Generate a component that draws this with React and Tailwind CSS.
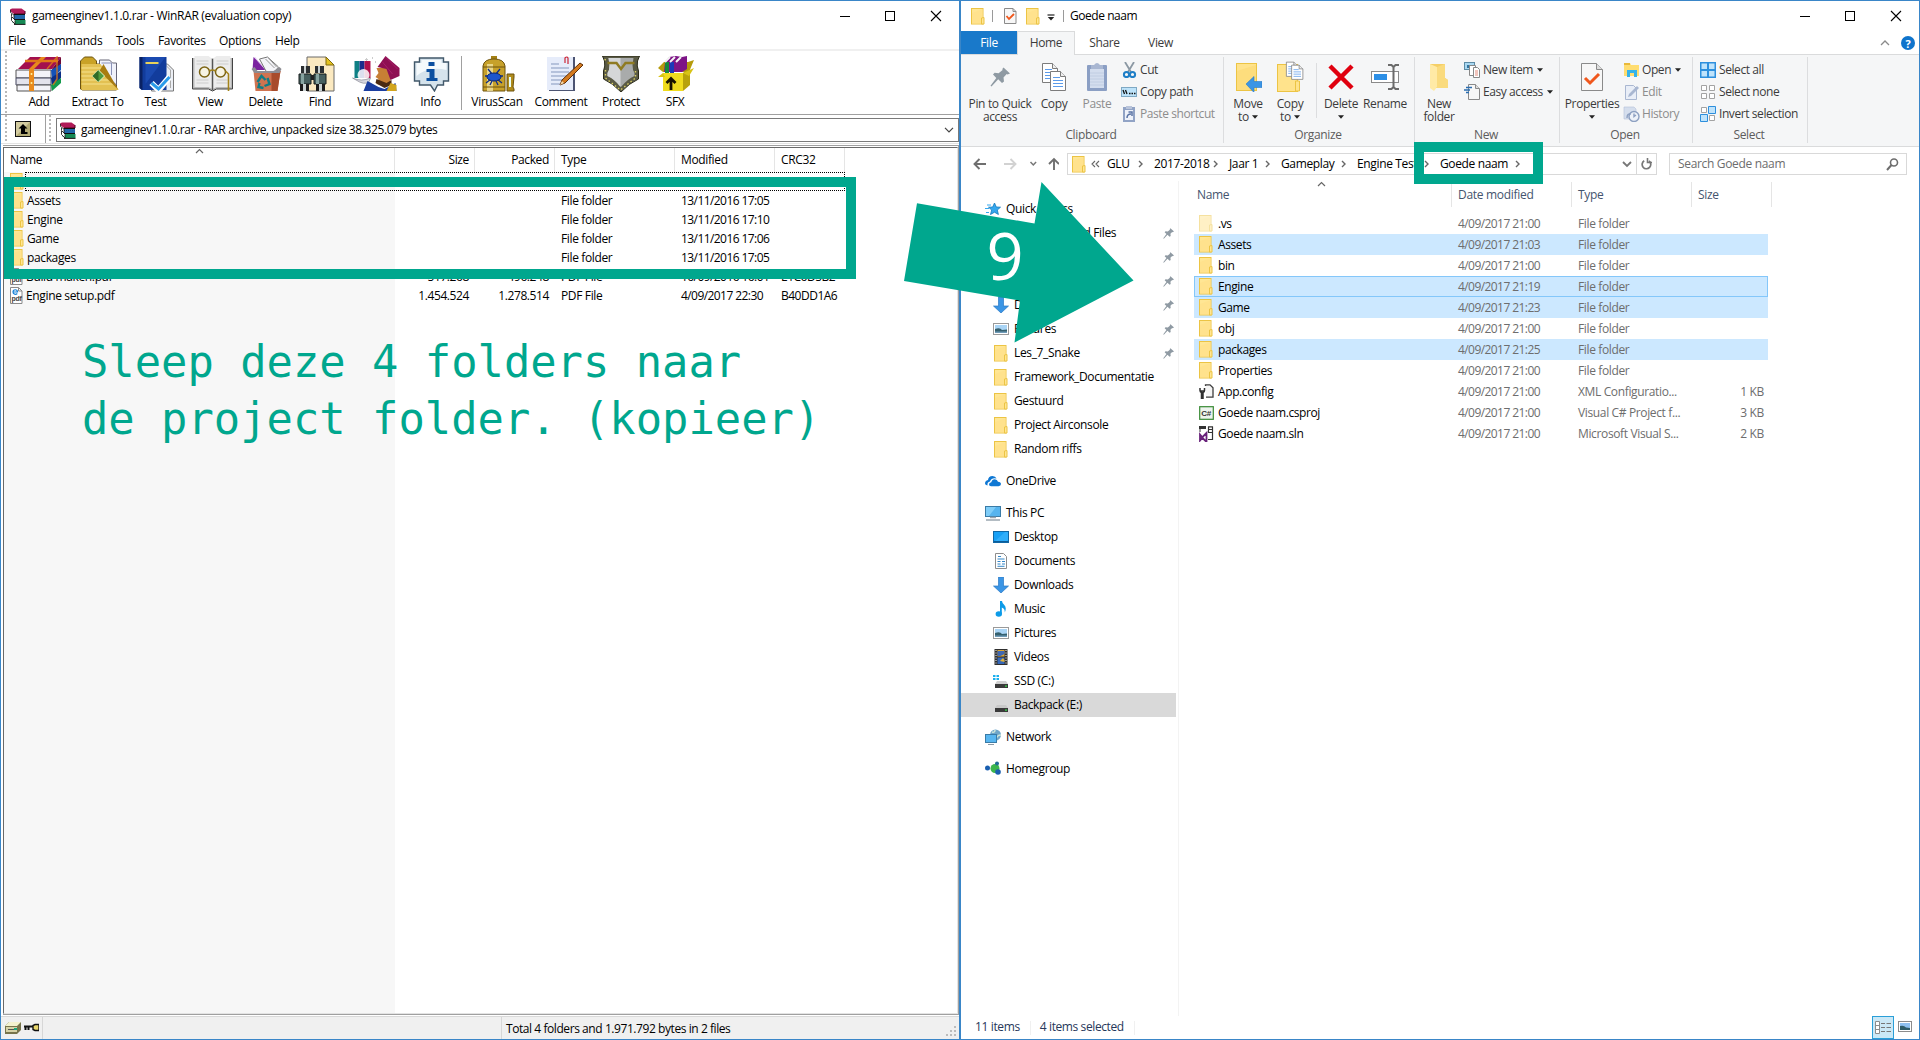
import React from "react";

/* ---------- shared drawings ---------- */

function Folder({ faded }) {
  return (
    <svg width="14" height="17" viewBox="0 0 14 17" className={faded ? "shrink-0 opacity-50" : "shrink-0"}>
      <rect x="0.5" y="0.5" width="11.5" height="15.5" fill="#ffe694" stroke="#ecc444" />
      <path d="M1 16V5L12 1v15z" fill="#ffe089" opacity=".6" />
      <path d="M10.500 16V10l2.500-.5v6.500z" fill="#ffe694" stroke="#ecc444" />
    </svg>
  );
}

function RarIcon() {
  return (
    <svg width="17" height="17" viewBox="0 0 17 17" className="shrink-0">
      <path d="M1 1.500L3 .5h9.500L16 3v3H5L1 3z" fill="#b01a58" />
      <path d="M5 6h11V3" fill="none" stroke="#4d0524" />
      <path d="M4 7h12v4H5L3 9z" fill="#2166a8" />
      <path d="M5 12h11.500v4H6l-3-2z" fill="#178a55" />
      <path d="M1.500 2v2.500L5 7v4l-2.500-2.500V6M2.500 9v3.500L6 16v-3.500" fill="#fff" stroke="#222" strokeWidth=".9" />
      <path d="M5 6.500h11M5 11.500h11M5 16.400h11.500" stroke="#111" />
    </svg>
  );
}

function PdfIcon() {
  return (
    <svg width="13" height="17" viewBox="0 0 13 17" className="shrink-0">
      <path d="M.5.500h8l3.500 3.500v12.500H.5z" fill="#fff" stroke="#8a8a8a" />
      <path d="M8.500.500V4H12" fill="none" stroke="#8a8a8a" />
      <path d="M3 5h4.500C7.500 2 3 2 3 5c0 2.500 3 2.800 4.300 1.500" fill="none" stroke="#1883d7" strokeWidth="1.200" />
      <text x="1.500" y="14" fontSize="7" fontWeight="bold" letterSpacing="-.3" fontFamily="Liberation Sans, sans-serif" fill="#444">pdf</text>
    </svg>
  );
}

function Pin({ size = 11 }) {
  return (
    <svg width={size} height={size} viewBox="0 0 20 20" className="shrink-0">
      <path d="M13.500 0.500l6.500 6-2.500 1-.8-.4-3.200 3.400.5 4-2 1.500-3.800-3.700L1.500 19.500l-1-.7L6.300 11 3 7.600l1.600-1.900 4 .5L12.600 3l-.3-1z" fill="#8f9aa3" />
    </svg>
  );
}

function Caret() {
  return (
    <svg width="6" height="4" viewBox="0 0 6 4" className="inline-block shrink-0">
      <path d="M0 .3h6L3 3.700z" fill="#222" />
    </svg>
  );
}

function SortUp() {
  return (
    <svg width="9" height="6" viewBox="0 0 9 6">
      <path d="M1 5l3.500-3.500L8 5" fill="none" stroke="#666" strokeWidth="1.200" />
    </svg>
  );
}

function WindowButtons() {
  return (
    <svg width="102" height="12" viewBox="0 0 102 12" className="shrink-0" shapeRendering="crispEdges">
      <path d="M0 6.500h10" stroke="#000" />
      <rect x="45.500" y="1.500" width="9" height="9" fill="none" stroke="#000" />
      <path d="M91 1l10 10M101 1L91 11" stroke="#000" shapeRendering="auto" strokeWidth="1.100" />
    </svg>
  );
}

/* ---------- archive window toolbar ---------- */

const toolIcons = {
  Add: (
    <g transform="translate(2)">
      <path d="M2 13L14 1h31L36 13z" fill="#a3104e" />
      <path d="M36 13L45 1v7l-8 10z" fill="#6e0a36" />
      <path d="M0 14h35v8H0z" fill="#f3f3f8" stroke="#555" />
      <path d="M35 14l10-6v6l-9 9z" fill="#1452b8" />
      <path d="M0 22h35v7H0z" fill="#e3e3ec" stroke="#44475e" />
      <path d="M35 22l10-7v7l-9 8z" fill="#0b2e86" />
      <path d="M1 29h34v6H1z" fill="#f3f3f8" stroke="#555" />
      <path d="M35 29l10-7v5l-9 8z" fill="#139a4c" />
      <path d="M13 13h5v22h-5zM13 13L25 1h5L18 13z" fill="#e98a1c" />
      <path d="M9 5h33" fill="none" stroke="#e07a18" strokeWidth="2.500" />
      <path d="M31 13L41 1v22l-4 6" fill="none" stroke="#e07a18" strokeWidth="1.500" opacity=".8" />
      <circle cx="15.500" cy="18" r="1" fill="#fff3a0" /><circle cx="15.500" cy="27" r="1" fill="#fff3a0" />
    </g>
  ),
  "Extract To": (
    <g transform="translate(6.500)">
      <path d="M1 33V5l4-4h8l4 4v3h20v26H3z" fill="#c9a227" stroke="#6d5410" />
      <path d="M20 4h10l3 3h4v22L20 14z" fill="#f0f2fa" stroke="#667" />
      <path d="M22 7h10v12" fill="none" stroke="#8b93b8" />
      <path d="M2 8h19l18 26H2z" fill="#e3c153" />
      <path d="M2 12h20M2 16h21M2 20h24M2 24h28M2 28h32" stroke="#f6e28e" />
      <path d="M24 8l15 26L20 15z" fill="#a87c10" />
      <path d="M19 14l6 6-6 6-6-6z" fill="#4f9a3d" stroke="#ddf5c8" />
      <path d="M19 14v12l-6-6z" fill="#2f6b27" />
    </g>
  ),
  Test: (
    <g transform="translate(8.500)">
      <path d="M22 8h6l6 6v21H12V8z" fill="#eceff5" stroke="#777" />
      <path d="M24 7l7 7v18" fill="none" stroke="#aaa" />
      <path d="M0 1h27v33H2L0 32z" fill="#123c9c" />
      <path d="M0 1h3v33L0 32z" fill="#0a2263" />
      <path d="M6 1h20L6 28z" fill="#2457c4" opacity=".5" />
      <path d="M6 7h13" stroke="#e8d25a" strokeWidth="2" />
      <path d="M12 27l7 7L30 21" fill="none" stroke="#fff" strokeWidth="6" />
      <path d="M12 27l7 6L30 21" fill="none" stroke="#2a9bea" strokeWidth="3" />
    </g>
  ),
  View: (
    <g transform="translate(5.500)">
      <path d="M1 2v31h16l4 2 4-2h16V2" fill="#b9b9b9" stroke="#444" />
      <path d="M3 0h14l4 3v30l-4-2H3zM39 0H25l-4 3v30l4-2h14z" fill="#ececec" />
      <path d="M21 3v31" stroke="#555" strokeWidth="1.500" />
      <path d="M5 5h12M5 8h12M5 24h12M5 27h12M25 5h12M25 8h12M25 24h11M25 27h11" stroke="#ccc" />
      <circle cx="13" cy="16" r="5" fill="#f7f4e4" stroke="#7b6312" strokeWidth="1.500" />
      <circle cx="29" cy="16" r="5" fill="#f7f4e4" stroke="#7b6312" strokeWidth="1.500" />
      <path d="M18 15q3-2 6 0M34 15l3 3v17" fill="none" stroke="#a3831a" strokeWidth="1.600" />
    </g>
  ),
  Delete: (
    <g transform="translate(10.500)">
      <path d="M2 1L15 14H1z" fill="#7b23a0" /><path d="M3 1l12 14" stroke="#d9b8ea" />
      <path d="M8 3l8-2 11 10-4 5h-8z" fill="#f4f4f8" stroke="#777" />
      <path d="M14 3l9 9M17 2l8 9" stroke="#999" />
      <path d="M2 15h27l-3 20H4z" fill="#cf7350" />
      <path d="M20 15h9l-3 20h-6z" fill="#a84c2c" />
      <path d="M0 13l3-2 3 4h16l6-4 2 2-2 4H3z" fill="#8d8d93" />
      <path d="M6 26l4-6 4 4M16 22l2 6-5 2M12 32l-5-1 1-4" fill="none" stroke="#0f7d86" strokeWidth="2.400" />
    </g>
  ),
  Find: (
    <g transform="translate(3)">
      <path d="M9 1h19l8 8v26H9z" fill="#fbe9c0" stroke="#6b6b6b" />
      <path d="M28 1v8h8z" fill="#e4c21d" stroke="#806a10" />
      <path d="M3 10h9v7H3zM17 10h9v7h-9z" fill="#2b2f31" />
      <path d="M1 18h12v10H1zM16 18h12v10H16z" fill="#47605f" stroke="#161c1c" />
      <path d="M3 18h3v10H3zM18 18h3v10h-3z" fill="#86a3a0" />
      <path d="M2 28h9v7H2zM18 28h9v7h-9z" fill="#1b1b1b" />
      <path d="M5 28h3v7H5zM21 28h3v7h-3zM6 10h2v7H6zM20 10h2v7h-2z" fill="#c9d1d1" />
      <path d="M13 19h3v5h-3z" fill="#222" />
    </g>
  ),
  Wizard: (
    <g transform="translate(1.500)">
      <path d="M2 5h5v17H2z" fill="#0f7f84" /><path d="M7 5h5v17H7z" fill="#1b2d8c" /><path d="M12 5h6v17h-6z" fill="#b0104d" />
      <circle cx="11" cy="19" r="6" fill="#fff" opacity=".85" />
      <path d="M0 22q9 4 18 0l-2 5q-6 1-9-1z" fill="#d7d7de" stroke="#667" strokeWidth=".5" />
      <path d="M24 12h14v14l-6 4-8-2 2-5-3-2 3-4z" fill="#c77f35" />
      <path d="M25 11L33 0l14 12v8l-9 4-4-11z" fill="#8e0f52" />
      <path d="M33 1l12 12M30 6l10 12" stroke="#a52068" />
      <path d="M24 23l10 4 5-3v5l-7 3-9-5z" fill="#4a2a12" />
      <path d="M11 35l4-10 11 6 6 2 11-6 1 8z" fill="#1b3ea0" />
      <path d="M34 35l4-8 6 2v6z" fill="#d2a51d" />
      <path d="M14 2v3M20 1v2M23 5v2M12.500 3.500h3" stroke="#ccc" />
    </g>
  ),
  Info: (
    <g transform="translate(8.500)">
      <path d="M5 2h24v4h5v19h-5v4h-6l-3 6-4-6H5v-4H0V6h5z" fill="#d5e3ec" stroke="#41586a" strokeWidth="1.400" />
      <path d="M7 4h20v3h5v7Q14 10 2 20V7h5z" fill="#f5fafc" />
      <path d="M14 6h6v4h-6zM12 13h8v9h3v3H12v-3h3v-6h-3z" fill="#0b4fa0" />
    </g>
  ),
  VirusScan: (
    <g transform="translate(11)">
      <path d="M8 0h6v3H8z" fill="#a38015" />
      <path d="M0 10Q1 3 11 3t11 7v25H0z" fill="#c7a12b" stroke="#6c520c" />
      <path d="M4 8h6v27H4z" fill="#f2e3a0" opacity=".8" />
      <path d="M0 11h22M0 31h22" stroke="#6c520c" />
      <path d="M5 13l4 5M17 13l-4 5M2 20h5M20 20h-5M3 27l5-4M19 27l-5-4M7 29l2-4M15 29l-2-4" stroke="#0c2c88" strokeWidth="1.300" />
      <ellipse cx="11" cy="21" rx="7" ry="4" fill="#1c55cc" stroke="#0a2572" />
      <path d="M24 18h7v3l-1 10 1 2v2h-7z" fill="#b08c1c" stroke="#6c520c" /><path d="M27 21v10" stroke="#e8fff8" strokeWidth="2" />
    </g>
  ),
  Comment: (
    <g transform="translate(11)">
      <path d="M2 1h26v34H2z" fill="#4c5472" />
      <path d="M0 1h26v33H0z" fill="#e6ecfa" />
      <path d="M4 8h8M4 12h18M4 16h18M4 20h18M4 24h15M4 28h9" stroke="#8497bd" />
      <path d="M18 7V2q2-2 3 0v6" fill="none" stroke="#cc2536" strokeWidth="1.200" />
      <path d="M33 7l3 2-18 18-5 2 2-5z" fill="#d47a1e" stroke="#5e2f08" />
      <path d="M13 29l2-4 2 2z" fill="#f7dcae" />
    </g>
  ),
  Protect: (
    <g transform="translate(6.500)">
      <path d="M0 0h37l-2 5q-1 5 1 10v8q-9 4-17.500 13Q10 27 1 23v-8q2-5 1-10z" fill="#5a5a45" stroke="#2a2a18" />
      <path d="M6 2h25l-1 7q0 5 2 8v3q-7 3-13.500 11Q12 23 5 20v-3q2-3 2-8z" fill="#a9abab" />
      <path d="M6 2h12v29Q12 23 5 20v-3q2-3 2-8z" fill="#d5d7d8" />
      <path d="M5 7h9l4.500 6L23 7h9" fill="none" stroke="#8f7b22" strokeWidth="2.500" />
      <path d="M3 3l-1 2M3 14v8l15 12 15-12v-8" fill="none" stroke="#d9cf62" strokeDasharray="1.500 2.500" strokeWidth="1.400" />
    </g>
  ),
  SFX: (
    <g transform="translate(8)">
      <path d="M0 12l6-6h24l6-2-5 12H5z" fill="#b59b0c" />
      <path d="M7 6l4-5 7-1 6 1 5-1v13l-5 3H6z" fill="#7d1486" />
      <path d="M7 6h4v11H7z" fill="#15873d" /><path d="M12 6h4v11h-4z" fill="#1b39b8" />
      <path d="M7 6l5-5M12 6l5-5M18 6l5-5" stroke="#f4f4f4" strokeWidth="2" />
      <path d="M5 17h20v18H5z" fill="#f0dc1d" />
      <path d="M25 17l7-5v17l-7 6z" fill="#b8a20c" />
      <path d="M5 17l-5 4h7M25 17l11-5-5 8" fill="#d8c315" />
      <path d="M13 34V23M8.500 27l4.500-4.500 4.500 4.500" fill="none" stroke="#1a1400" strokeWidth="2.800" />
    </g>
  ),
};

function Tool({ name, w }) {
  return (
    <div className={`flex flex-col items-center ${w}`}>
      <svg width="50" height="36" viewBox="0 0 50 36">{toolIcons[name]}</svg>
      <span className="mt-[2px] leading-[16px]">{name}</span>
    </div>
  );
}

function Grip({ h }) {
  return (
    <div className={`w-[2px] shrink-0 ${h} bg-[repeating-linear-gradient(to_bottom,#b8b8b8_0,#b8b8b8_2px,#fff_2px,#fff_4px)]`} />
  );
}

/* ---------- archive window ---------- */

const archiveGrid = "grid w-[841px] grid-cols-[391px_80px_80px_120px_100px_70px]";

function ArchiveRow({ icon, name, size, packed, type, date, crc }) {
  return (
    <div className={`${archiveGrid} h-[19px] items-center`}>
      <div className="flex items-center gap-[3px] pl-[6px]">{icon}<span>{name}</span></div>
      <div className="pr-[6px] text-right tracking-[-0.4px]">{size}</div>
      <div className="pr-[6px] text-right tracking-[-0.4px]">{packed}</div>
      <div className="pl-[6px]">{type}</div>
      <div className="pl-[6px] tracking-[-0.57px]">{date}</div>
      <div className="pl-[6px] tracking-[-0.5px]">{crc}</div>
    </div>
  );
}

function ArchiveWindow() {
  return (
    <section className="flex h-[1040px] w-[960px] flex-col border border-[#3a86c8] bg-white">
      <header className="flex h-[30px] shrink-0 items-center pr-[17px] pl-[8px]">
        <RarIcon />
        <span className="ml-[6px] flex-1 tracking-[-0.3px]">gameenginev1.1.0.rar - WinRAR (evaluation copy)</span>
        <WindowButtons />
      </header>
      <nav className="flex h-[20px] shrink-0 items-center border-b-2 border-[#f0f0f0] pt-[2px] pl-[7px]">
        <span className="w-[32px]">File</span>
        <span className="w-[76px] tracking-[-0.2px]">Commands</span>
        <span className="w-[42px]">Tools</span>
        <span className="w-[61px]">Favorites</span>
        <span className="w-[56px]">Options</span>
        <span>Help</span>
      </nav>
      <div className="flex h-[64px] shrink-0 border-b border-[#a0a0a0] pl-[4px]">
        <Grip h="h-[62px]" />
        <div className="flex pt-[5px] pl-[3px]">
          <Tool name="Add" w="w-[58px]" />
          <Tool name="Extract To" w="w-[59px]" />
          <Tool name="Test" w="w-[57px]" />
          <Tool name="View" w="w-[53px]" />
          <Tool name="Delete" w="w-[57px]" />
          <Tool name="Find" w="w-[52px]" />
          <Tool name="Wizard" w="w-[59px]" />
          <Tool name="Info" w="w-[51px]" />
          <div className="mr-[6px] ml-[5px] h-[54px] w-px bg-[#a0a0a0]" />
          <Tool name="VirusScan" w="w-[58px]" />
          <Tool name="Comment" w="w-[70px]" />
          <Tool name="Protect" w="w-[50px]" />
          <Tool name="SFX" w="w-[58px]" />
        </div>
      </div>
      <div className="flex h-[29px] shrink-0 items-center border-b border-[#e3e3e3] pl-[4px]">
        <Grip h="h-[28px]" />
        <svg width="16" height="16" viewBox="0 0 16 16" className="ml-[8px]">
          <rect x=".5" y=".5" width="15" height="15" fill="#b3ab75" stroke="#111" />
          <path d="M1 1h14L1 15z" fill="#e8e3bd" opacity=".6" />
          <path d="M8 3l4.500 4.500H10V11h2.500v2H6V7.500H3.500z" fill="#000" />
        </svg>
        <div className="ml-[14px] h-[28px] w-px bg-[#a0a0a0]" />
        <div className="ml-[3px]"><Grip h="h-[28px]" /></div>
        <div className="mt-[2px] ml-[5px] flex h-[24px] flex-1 items-center border border-[#7a7a7a] pr-[4px] pl-[2px]">
          <RarIcon />
          <span className="ml-[5px] flex-1">gameenginev1.1.0.rar - RAR archive, unpacked size 38.325.079 bytes</span>
          <svg width="10" height="6" viewBox="0 0 10 6"><path d="M1 .8l4 4 4-4" fill="none" stroke="#444" strokeWidth="1.200" /></svg>
        </div>
      </div>
      <div className="mt-px ml-[2px] flex min-h-0 flex-1 flex-col border-t border-r border-b border-[#a0a0a0] pt-px">
        <div className="flex min-h-0 flex-1 flex-col border border-t-[#696969] border-r-[#e3e3e3] border-b-[#e3e3e3] border-l-[#696969]">
          <div className={`${archiveGrid} relative h-[24px] shrink-0 items-center [&>div]:flex [&>div]:h-full [&>div]:items-center [&>div]:border-r [&>div]:border-[#e5e5e5]`}>
            <div className="pl-[6px]">Name</div>
            <div className="justify-end pr-[5px]">Size</div>
            <div className="justify-end pr-[5px]">Packed</div>
            <div className="pl-[6px]">Type</div>
            <div className="pl-[6px]">Modified</div>
            <div className="pl-[6px]">CRC32</div>
            <span className="absolute top-0 left-[191px] leading-none"><SortUp /></span>
          </div>
          <div className="flex-1 bg-[linear-gradient(to_right,#f7f7f7_391px,#fff_391px)]">
            <div className="flex h-[19px] w-[841px] items-center gap-[1px] pl-[6px]">
              <Folder />
              <div className="h-[19px] flex-1 border border-dotted border-black" />
            </div>
            <ArchiveRow icon={<Folder />} name="Assets" type="File folder" date="13/11/2016 17:05" />
            <ArchiveRow icon={<Folder />} name="Engine" type="File folder" date="13/11/2016 17:10" />
            <ArchiveRow icon={<Folder />} name="Game" type="File folder" date="13/11/2016 17:06" />
            <ArchiveRow icon={<Folder />} name="packages" type="File folder" date="13/11/2016 17:05" />
            <ArchiveRow icon={<PdfIcon />} name="Build maken.pdf" size="517.268" packed="496.248" type="PDF File" date="16/09/2016 16:01" crc="E1C6D5B2" />
            <ArchiveRow icon={<PdfIcon />} name="Engine setup.pdf" size="1.454.524" packed="1.278.514" type="PDF File" date="4/09/2017 22:30" crc="B40DD1A6" />
          </div>
        </div>
      </div>
      <footer className="mt-px flex h-[23px] shrink-0 items-center border-t border-[#d9d9d9] bg-[#f0f0f0] pl-[4px]">
        <svg width="34" height="14" viewBox="0 0 34 14">
          <path d="M0 5l4-4h12v8l-4 4H0z" fill="#77744c" />
          <path d="M0 5l4-4h12l-4 4z" fill="#f4f1cf" /><path d="M1 6h11v5H1z" fill="#d6d2a6" />
          <path d="M3 8.500h7" stroke="#555" /><rect x="9" y="7" width="3" height="2" fill="#19a67a" />
          <path d="M19 5.500h10M20.500 5v4M23.500 5v4" stroke="#111" strokeWidth="2" />
          <path d="M34 3.500h-4l-2 1v4l2 1h4z" fill="#e8d66a" stroke="#111" strokeWidth="1.400" />
        </svg>
        <div className="ml-[3px] h-full w-px bg-[#d7d7d7]" />
        <div className="ml-[458px] h-full w-px bg-[#d7d7d7]" />
        <span className="ml-[4px] flex-1 pt-[1px] tracking-[-0.43px]">Total 4 folders and 1.971.792 bytes in 2 files</span>
        <svg width="12" height="12" viewBox="0 0 12 12" className="mt-[7px] mr-px" fill="#bcbcbc">
          <path d="M8 0h2v2H8zM8 4h2v2H8zM8 8h2v2H8zM4 4h2v2H4zM4 8h2v2H4zM0 8h2v2H0z" />
        </svg>
      </footer>
    </section>
  );
}

/* ---------- explorer ribbon ---------- */

function BigButton({ w, icon, lines, caret, muted }) {
  return (
    <div className={`flex flex-col items-center ${w} ${muted ? "text-[#8d8d8d]" : ""}`}>
      <div className="flex h-[32px] items-center justify-center">{icon}</div>
      <div className="mt-[4px] flex flex-col items-center leading-[13px] whitespace-nowrap">
        {lines.map((line, i) => (
          <span key={line} className="flex items-center gap-[3px]">
            {line}
            {caret === "inline" && i === lines.length - 1 && <Caret />}
          </span>
        ))}
        {caret === "below" && <span className="flex h-[13px] items-center"><Caret /></span>}
      </div>
    </div>
  );
}

function SmallButton({ icon, label, caret, muted }) {
  return (
    <div className={`flex h-[22px] items-center gap-[2px] whitespace-nowrap ${muted ? "text-[#8d8d8d]" : ""}`}>
      <svg width="17" height="16" viewBox="0 0 17 16">{icon}</svg>
      <span className="tracking-[-0.42px]">{label}</span>
      {caret && <span className="ml-[2px] flex items-center"><Caret /></span>}
    </div>
  );
}

function Group({ w, label, pad, children }) {
  return (
    <div className={`mt-[2px] flex h-[86px] flex-col border-r border-[#dcdddf] ${w}`}>
      <div className={`flex h-[73px] ${pad}`}>{children}</div>
      <div className="pr-[2px] text-center leading-[16px] text-[#5c5c5c]">{label}</div>
    </div>
  );
}

const Page = ({ x, y, s = "#7c7c7c" }) => (
  <g transform={`translate(${x} ${y})`}>
    <path d="M.5.500h10l5 5v14H.5z" fill="#fff" stroke={s} />
    <path d="M10.500.500v5h5" fill="#eee" stroke={s} />
    <path d="M3 6.500h7M3 9.500h10M3 12.500h10M3 15.500h10" stroke="#5b9bea" />
  </g>
);

const bigIcons = {
  pin: <Pin size={20} />,
  copy: <svg width="26" height="30" viewBox="0 0 26 30"><Page x={1} y={1} /><Page x={9} y={9} /></svg>,
  paste: (
    <svg width="22" height="30" viewBox="0 0 22 30">
      <rect x="1" y="3" width="20" height="26" rx="1" fill="#8b9fc4" /><rect x="4" y="7" width="14" height="19" fill="#d3ddee" />
      <path d="M5 3h3q3-4 6 0h3v4H5z" fill="#a9b7d2" /><path d="M4 11h14M4 14h14M4 17h14M4 20h14M4 23h14" stroke="#c0cde2" />
    </svg>
  ),
  move: (
    <svg width="28" height="30" viewBox="0 0 28 30">
      <rect x="2.500" y="1.500" width="20" height="27" fill="#ffe38c" stroke="#ecc444" /><path d="M3 28V9L22 3v25z" fill="#fbd873" opacity=".6" />
      <path d="M12 22l8-7.500v5h8v6h-8v5z" fill="#3b95e5" stroke="#2a79c4" strokeWidth=".6" />
    </svg>
  ),
  copyTo: (
    <svg width="28" height="32" viewBox="0 0 28 32">
      <rect x="1.500" y="3.500" width="20" height="27" fill="#ffe38c" stroke="#ecc444" /><path d="M19.500 30V20h4v10z" fill="#ffe38c" stroke="#ecc444" />
      <g transform="translate(10 0) scale(.75)"><Page x={0} y={1} /><Page x={7} y={5} /></g>
    </svg>
  ),
  del: (
    <svg width="26" height="28" viewBox="0 0 26 28"><path d="M2 3l22 22M24 3L2 25" stroke="#e0000f" strokeWidth="4.500" /></svg>
  ),
  rename: (
    <svg width="30" height="30" viewBox="0 0 30 30">
      <rect x="1.500" y="9.500" width="27" height="11" fill="#fff" stroke="#8a8a8a" /><rect x="4" y="12" width="13" height="6" fill="#2c8fe6" />
      <path d="M18 3h3.500l2 2 2-2H29M18 27h3.500l2-2 2 2H29M23.500 5v20" fill="none" stroke="#6b6b6b" strokeWidth="2" />
    </svg>
  ),
  newFolder: (
    <svg width="20" height="28" viewBox="0 0 20 28">
      <path d="M1 1h15v14l3 2v8H7z" fill="#f5cf66" /><path d="M1 1l7 3v20l-3 4-4-3z" fill="#ffeaa6" /><path d="M8 4L16 1v14l3 2v8H8z" fill="#fadb7e" />
    </svg>
  ),
  properties: (
    <svg width="22" height="28" viewBox="0 0 22 28">
      <path d="M.5.500h15l6 6v21H.5z" fill="#f7f7f7" stroke="#8a8a8a" /><path d="M15.500.500v6h6" fill="#ddd" stroke="#8a8a8a" />
      <path d="M4 15l5 5 9-9" fill="none" stroke="#f0571c" strokeWidth="3" />
    </svg>
  ),
};

const smallIcons = {
  cut: (
    <g fill="none">
      <path d="M4 0l6 10M13 0L7 10" stroke="#8b98a3" strokeWidth="1.800" />
      <circle cx="5.500" cy="12.500" r="2.600" stroke="#1f7fc7" strokeWidth="2" /><circle cx="11.500" cy="12.500" r="2.600" stroke="#1f7fc7" strokeWidth="2" />
    </g>
  ),
  path: (
    <g>
      <rect x=".5" y="3.500" width="15" height="9" fill="#bde3fa" stroke="#7fa9c4" />
      <path d="M2 6l1.500 4M4.500 6L6 10M8 9.500h1.500M10.500 9.500H12M13 9.500h1.500" stroke="#111" strokeWidth="1.300" />
    </g>
  ),
  shortcut: (
    <g>
      <rect x="2" y="1" width="12" height="15" fill="#91a3c5" /><rect x="4" y="4" width="8" height="10" fill="#eef2fa" />
      <rect x="5" y="0" width="6" height="3" fill="#b9c4da" /><path d="M6 12q0-4 4-4M7.500 6H11v4" fill="none" stroke="#5b74a5" strokeWidth="1.500" />
    </g>
  ),
  newItem: (
    <g>
      <rect x=".5" y=".5" width="10" height="7" fill="#a9d8f2" stroke="#5c8ba5" /><rect x="3" y="3" width="4" height="3" fill="#3475a0" />
      <path d="M5.500 3.500h6v10h-6z" fill="#fff" stroke="#888" /><path d="M9.500 5.500h4l2 2v8h-6z" fill="#fff" stroke="#888" />
      <path d="M11 9h3M11 11h3M11 13h3" stroke="#e58a7a" />
    </g>
  ),
  easy: (
    <g>
      <path d="M4.500.500h7l4 4v11h-11z" fill="#f7f7f7" stroke="#8a8a8a" /><path d="M11.500.500v4h4" fill="#ddd" stroke="#8a8a8a" />
      <path d="M2 3.500h6M0 6h6M2 8.500h3" stroke="#2a6db0" strokeWidth="1.400" />
    </g>
  ),
  open: (
    <g>
      <path d="M1 1h6l1 2h8v11H1z" fill="#ffdd70" /><path d="M1 1h6v2H1z" fill="#e9b93a" />
      <path d="M4 15V8h10v7h-3v-4H7v4z" fill="#35b3ea" />
    </g>
  ),
  edit: (
    <g>
      <path d="M2.500 1.500h8l3 3v11h-11z" fill="#e9eef7" stroke="#a9b7d1" /><path d="M5 13l1-3 8-8 2 2-8 8z" fill="#a9b7d1" />
    </g>
  ),
  history: (
    <g>
      <path d="M1 1h10l2 2v10H1z" fill="#d5deed" stroke="#b3c0d8" strokeWidth=".6" /><circle cx="11" cy="10.500" r="5" fill="#eef2f9" stroke="#8ea1c2" strokeWidth="1.400" />
      <path d="M11 7.500v3l2-1.500M4 12q0-5 4-4" fill="none" stroke="#8ea1c2" strokeWidth="1.400" />
    </g>
  ),
  all: (
    <g>
      <rect width="16" height="16" fill="#2d8fdd" />
      <path d="M1.500 1.500h5.500v5.500H1.500zM9 1.500h5.500v5.500H9zM1.500 9h5.500v5.500H1.500zM9 9h5.500v5.500H9z" fill="#bfe3fb" />
    </g>
  ),
  none: <path d="M1.500 1.500h5v5h-5zM9.500 1.500h5v5h-5zM1.500 9.500h5v5h-5zM9.500 9.500h5v5h-5z" fill="#fff" stroke="#a3a3a3" />,
  invert: (
    <g>
      <path d="M1.500 1.500h5v5h-5zM9.500 9.500h5v5h-5z" fill="#fff" stroke="#a3a3a3" />
      <path d="M8.500.500h7v7h-7zM.5 8.500h7v7h-7z" fill="#bfe3fb" stroke="#2d8fdd" />
    </g>
  ),
};

function Ribbon() {
  return (
    <div className="flex h-[93px] shrink-0 border-t border-b border-[#dadbdc] bg-[#f5f6f7] text-[#3b3b3b]">
      <Group w="w-[263px]" label="Clipboard" pad="pl-[7px] pt-[4px]">
        <BigButton w="w-[64px]" icon={bigIcons.pin} lines={["Pin to Quick", "access"]} />
        <BigButton w="w-[44px]" icon={bigIcons.copy} lines={["Copy"]} />
        <BigButton w="w-[42px]" icon={bigIcons.paste} lines={["Paste"]} muted />
        <div className="-mt-[2px] ml-[3px] flex flex-col">
          <SmallButton icon={smallIcons.cut} label="Cut" />
          <SmallButton icon={smallIcons.path} label="Copy path" />
          <SmallButton icon={smallIcons.shortcut} label="Paste shortcut" muted />
        </div>
      </Group>
      <Group w="w-[191px]" label="Organize" pad="pl-[2px] pt-[4px]">
        <BigButton w="w-[44px]" icon={bigIcons.move} lines={["Move", "to"]} caret="inline" />
        <BigButton w="w-[40px]" icon={bigIcons.copyTo} lines={["Copy", "to"]} caret="inline" />
        <div className="mt-[2px] mr-[3px] ml-[6px] h-[55px] w-px bg-[#dcdddf]" />
        <BigButton w="w-[42px]" icon={bigIcons.del} lines={["Delete"]} caret="below" />
        <BigButton w="w-[46px]" icon={bigIcons.rename} lines={["Rename"]} />
      </Group>
      <Group w="w-[145px]" label="New" pad="pl-[4px] pt-[4px]">
        <BigButton w="w-[40px]" icon={bigIcons.newFolder} lines={["New", "folder"]} />
        <div className="-mt-[2px] ml-[5px] flex flex-col">
          <SmallButton icon={smallIcons.newItem} label="New item" caret />
          <SmallButton icon={smallIcons.easy} label="Easy access" caret />
        </div>
      </Group>
      <Group w="w-[133px]" label="Open" pad="pl-[4px] pt-[4px]">
        <BigButton w="w-[56px]" icon={bigIcons.properties} lines={["Properties"]} caret="below" />
        <div className="-mt-[2px] ml-[3px] flex flex-col">
          <SmallButton icon={smallIcons.open} label="Open" caret />
          <SmallButton icon={smallIcons.edit} label="Edit" muted />
          <SmallButton icon={smallIcons.history} label="History" muted />
        </div>
      </Group>
      <Group w="w-[115px]" label="Select" pad="pl-[7px] pt-[2px]">
        <div className="flex flex-col">
          <SmallButton icon={smallIcons.all} label="Select all" />
          <SmallButton icon={smallIcons.none} label="Select none" />
          <SmallButton icon={smallIcons.invert} label="Invert selection" />
        </div>
      </Group>
    </div>
  );
}

/* ---------- explorer navigation pane ---------- */

const navIcons = {
  star: (
    <g>
      <path d="M9.500 2l1.800 4 4.200.2-3.200 2.800 1.100 4.500-3.900-2.300L5.500 13.500l1.200-4.500L3.500 6.200l4.200-.2z" fill="#35a7ee" stroke="#1178bd" strokeWidth=".8" />
      <path d="M2 4h4M0 7.500h4M1 11.500h3" stroke="#35a7ee" />
    </g>
  ),
  down: <path d="M5.500 0h5v9h5L8 16 .5 9h5z" fill="#3b95e5" stroke="#2a79c4" strokeWidth=".7" />,
  picture: (
    <g>
      <rect x=".5" y="2.500" width="15" height="11" fill="#fff" stroke="#9a9a9a" /><rect x="2" y="4" width="12" height="8" fill="#a9d4f5" />
      <path d="M2 8q5-2 7 1l5-.5V12H2z" fill="#35606e" /><path d="M2 10.500h12V12H2z" fill="#6f9bb8" />
    </g>
  ),
  cloud: (
    <g fill="#0f78d4">
      <path d="M0 10.500Q0 7.500 3 7q.5-4 4.500-4 3 0 4 2.500-5-1-6.500 3-3 .5-2.500 4Q0 12 0 10.500z" />
      <path d="M4 11.500q0-2 2.300-2.300Q7 6.200 9.800 6.200q2.500 0 3.200 2.500 3 .3 3 2.300t-2.500 2.300H6.500Q4 13.500 4 11.500z" />
    </g>
  ),
  pc: (
    <g>
      <rect x=".5" y="1.500" width="15" height="10" fill="#56b4ee" stroke="#3a7ba6" /><path d="M1 2h10L4 11H1z" fill="#7fcdf8" />
      <path d="M5 12.500h6M1 15h14" stroke="#9aa6b0" strokeWidth="1.400" />
    </g>
  ),
  desktop: (
    <g>
      <rect x=".5" y="2.500" width="15" height="11" fill="#18a0f5" stroke="#1067a5" /><path d="M1 13L12 3h3v8L13 13z" fill="#3fb8ff" opacity=".6" /><path d="M1 12.500h14" stroke="#0b5c98" />
    </g>
  ),
  doc: (
    <g>
      <path d="M2.500.500h8l3 3v12h-11z" fill="#fff" stroke="#8d8d8d" /><path d="M5 3.500h3M4.500 6h7M4.500 8.500h3M9 8.500h3M4.500 11h3M9 11h3M4.500 13.300h7" stroke="#3587c8" />
    </g>
  ),
  music: (
    <g fill="#0c9be8">
      <path d="M7 0h2q.2 2.500 2.300 4Q14 7 11.800 11.500 12 7.500 8.800 6.500v6.500H7z" /><ellipse cx="5.800" cy="13" rx="3.200" ry="2.700" />
    </g>
  ),
  video: (
    <g>
      <rect x="1.500" y="0" width="13" height="16" fill="#2f2f2f" /><rect x="4.500" y="1" width="7" height="6.500" fill="#dba532" /><path d="M4.500 2h7v3l-4 2h-3z" fill="#3f68b3" />
      <rect x="4.500" y="8.500" width="7" height="6.500" fill="#3567b8" /><path d="M7 12l3-3 1.500 2v2z" fill="#dfb23c" />
      <path d="M3 1v14M13 1v14" stroke="#fff" strokeDasharray="1 1.500" />
    </g>
  ),
  ssd: (
    <g>
      <path d="M0 2h2.500v2H0zM3.500 2H6v2H3.500zM0 5h2.500v2H0zM3.500 5H6v2H3.500z" fill="#1ab0ee" />
      <path d="M4 8h9l2 3H2z" fill="#d0d0d0" /><rect x="2" y="11" width="13" height="4" fill="#3a3a3a" /><rect x="12" y="12.500" width="2" height="1.200" fill="#37e04a" />
    </g>
  ),
  drive: (
    <g>
      <path d="M4 8h9l2 3H2z" fill="#c9c9c9" /><rect x="2" y="11" width="13" height="4" fill="#3a3a3a" /><rect x="12" y="12.500" width="2" height="1.200" fill="#37e04a" />
    </g>
  ),
  network: (
    <g>
      <circle cx="10.500" cy="6" r="5.500" fill="#6fa6c9" /><path d="M7 3q3 1 3-2M11 10q1-4 5-4" stroke="#cfe6d8" fill="none" strokeWidth="1.500" />
      <rect x=".5" y="5.500" width="11" height="8" fill="#58b6f0" stroke="#3a7ba6" /><path d="M3 15.500h6" stroke="#8a99a5" />
    </g>
  ),
  homegroup: (
    <g>
      <circle cx="10" cy="7.500" r="4.500" fill="#3cb64d" /><circle cx="2.500" cy="7" r="2.500" fill="#1a5fb0" /><circle cx="12" cy="2.500" r="2" fill="#1f6c96" /><circle cx="13" cy="11" r="2.800" fill="#1a5fb0" />
    </g>
  ),
};

function NavItem({ icon, label, root, pinned, active, gap }) {
  return (
    <div className={`flex h-[24px] w-[215px] items-center pr-[2px] ${root ? "pl-[24px]" : "pl-[32px]"} ${active ? "bg-[#d9d9d9]" : ""} ${gap ? "mt-[8px]" : ""}`}>
      <span className="flex w-[16px] justify-center">
        {icon === "folder" ? <Folder /> : <svg width="16" height="16" viewBox="0 0 16 16">{navIcons[icon]}</svg>}
      </span>
      <span className="ml-[5px] flex-1">{label}</span>
      {pinned && <Pin />}
    </div>
  );
}

function NavPane() {
  return (
    <aside className="-mt-px flex w-[218px] shrink-0 flex-col border-r border-[#f3f3f3] pt-[16px]">
      <NavItem root icon="star" label="Quick access" />
      <NavItem icon="folder" label="Creative Cloud Files" pinned />
      <NavItem icon="desktop" label="Desktop" pinned />
      <NavItem icon="doc" label="Documents" pinned />
      <NavItem icon="down" label="Downloads" pinned />
      <NavItem icon="picture" label="Pictures" pinned />
      <NavItem icon="folder" label="Les_7_Snake" pinned />
      <NavItem icon="folder" label="Framework_Documentatie" />
      <NavItem icon="folder" label="Gestuurd" />
      <NavItem icon="folder" label="Project Airconsole" />
      <NavItem icon="folder" label="Random riffs" />
      <NavItem root gap icon="cloud" label="OneDrive" />
      <NavItem root gap icon="pc" label="This PC" />
      <NavItem icon="desktop" label="Desktop" />
      <NavItem icon="doc" label="Documents" />
      <NavItem icon="down" label="Downloads" />
      <NavItem icon="music" label="Music" />
      <NavItem icon="picture" label="Pictures" />
      <NavItem icon="video" label="Videos" />
      <NavItem icon="ssd" label="SSD (C:)" />
      <NavItem icon="drive" label="Backpack (E:)" active />
      <NavItem root gap icon="network" label="Network" />
      <NavItem root gap icon="homegroup" label="Homegroup" />
    </aside>
  );
}

/* ---------- explorer file list ---------- */

const fileIcons = {
  config: (
    <svg width="15" height="16" viewBox="0 0 15 16">
      <path d="M6.500 2V.8h4.500l3 3v9.400H7" fill="#f5f5f5" stroke="#3d3d3d" strokeWidth="1.300" />
      <path d="M1 4v2.500q0 1.500 1.500 2V15M5.500 4v2.500Q5.500 8 4 8.500V15M1.500 7h3.500M3.200 9v6" fill="none" stroke="#2f2f2f" strokeWidth="1.500" />
    </svg>
  ),
  csproj: (
    <svg width="15" height="14" viewBox="0 0 15 14">
      <rect x=".7" y=".7" width="13.600" height="12.600" fill="#eef3ee" stroke="#388a34" strokeWidth="1.200" />
      <text x="2.200" y="9.800" fontSize="8" fontWeight="bold" letterSpacing="-.2" fontFamily="Liberation Sans, sans-serif" fill="#333">C#</text>
    </svg>
  ),
  sln: (
    <svg width="15" height="16" viewBox="0 0 15 16">
      <path d="M1 6V1h6" fill="none" stroke="#333" /><path d="M0 0h7v3H0z" fill="#333" />
      <path d="M9 .8h5M9 3.500h4M9 6.500h5M13.500.500v13H9M9.500.500v6" fill="none" stroke="#333" strokeWidth="1.200" />
      <path d="M1 8.500l2.500 3L1 14.500zM7.500 7L3 11.500 7.500 16z" fill="none" stroke="#68217a" strokeWidth="1.800" />
    </svg>
  ),
};

const files = [
  { name: ".vs", date: "4/09/2017 21:00", type: "File folder", faded: true },
  { name: "Assets", date: "4/09/2017 21:03", type: "File folder", look: "bg-[#cce8ff]" },
  { name: "bin", date: "4/09/2017 21:00", type: "File folder" },
  { name: "Engine", date: "4/09/2017 21:19", type: "File folder", look: "bg-[#cce8ff] outline outline-[#84c7fa] -outline-offset-1" },
  { name: "Game", date: "4/09/2017 21:23", type: "File folder", look: "bg-[#cce8ff]" },
  { name: "obj", date: "4/09/2017 21:00", type: "File folder" },
  { name: "packages", date: "4/09/2017 21:25", type: "File folder", look: "bg-[#cce8ff]" },
  { name: "Properties", date: "4/09/2017 21:00", type: "File folder" },
  { name: "App.config", date: "4/09/2017 21:00", type: "XML Configuratio...", size: "1 KB", icon: "config" },
  { name: "Goede naam.csproj", date: "4/09/2017 21:00", type: "Visual C# Project f...", size: "3 KB", icon: "csproj" },
  { name: "Goede naam.sln", date: "4/09/2017 21:00", type: "Microsoft Visual S...", size: "2 KB", icon: "sln" },
];

function FileList() {
  return (
    <main className="flex flex-1 flex-col pl-[15px]">
      <div className="relative grid h-[25px] w-[578px] grid-cols-[258px_120px_120px_80px] items-center text-[#44546e] [&>div]:flex [&>div]:h-full [&>div]:items-center [&>div]:border-r [&>div]:border-[#e5e5e5]">
        <div className="pl-[3px]">Name</div>
        <div className="pl-[6px] tracking-[-0.3px]">Date modified</div>
        <div className="pl-[6px]">Type</div>
        <div className="pl-[6px]">Size</div>
        <span className="absolute -top-px left-[123px] leading-none"><SortUp /></span>
      </div>
      <div className="mt-[6px] flex flex-col">
        {files.map((f) => (
          <div key={f.name} className={`grid h-[21px] w-[574px] grid-cols-[258px_120px_120px_76px] items-center text-[#6d6d6d] ${f.look || ""}`}>
            <div className="flex items-center gap-[4px] pl-[5px] text-black">
              <span className="flex w-[15px]">{f.icon ? fileIcons[f.icon] : <Folder faded={f.faded} />}</span>
              <span className="tracking-[-0.4px]">{f.name}</span>
            </div>
            <div className="pl-[6px] tracking-[-0.57px]">{f.date}</div>
            <div className="pl-[6px]">{f.type}</div>
            <div className="pr-[4px] text-right">{f.size}</div>
          </div>
        ))}
      </div>
    </main>
  );
}

/* ---------- explorer window ---------- */

function Chevron() {
  return (
    <svg width="5" height="8" viewBox="0 0 5 8" className="shrink-0">
      <path d="M1 1l3 3-3 3" fill="none" stroke="#666" strokeWidth="1.400" />
    </svg>
  );
}

function Crumb({ w, label }) {
  return (
    <span className={`flex items-center justify-between whitespace-nowrap ${w}`}>
      {label}
      <Chevron />
    </span>
  );
}

function ExplorerWindow() {
  return (
    <section className="flex h-[1040px] w-[960px] flex-col border border-[#3a86c8] bg-white">
      <header className="flex h-[30px] shrink-0 items-center pr-[17px] pl-[10px]">
        <Folder />
        <div className="ml-[7px] h-[12px] w-px bg-[#9a9a9a]" />
        <svg width="13" height="16" viewBox="0 0 13 16" className="ml-[11px]">
          <path d="M.5.500h8.500l3 3v12H.5z" fill="#f7f7f7" stroke="#8a8a8a" /><path d="M9 .5v3h3" fill="none" stroke="#8a8a8a" />
          <path d="M2.500 8l2.500 3 5-5" fill="none" stroke="#f0571c" strokeWidth="1.800" />
        </svg>
        <div className="ml-[9px] flex"><Folder /></div>
        <svg width="8" height="7" viewBox="0 0 8 7" className="mt-[2px] ml-[7px]"><path d="M.5 1h7" stroke="#222" strokeWidth="1.200" /><path d="M.8 3h6.400L4 6.500z" fill="#222" /></svg>
        <div className="ml-[8px] h-[12px] w-px bg-[#9a9a9a]" />
        <span className="ml-[6px] flex-1 tracking-[-0.45px]">Goede naam</span>
        <WindowButtons />
      </header>
      <nav className="z-10 -mb-px flex h-[24px] shrink-0 text-center leading-[23px] text-[#3b3b3b]">
        <span className="h-[23px] w-[56px] bg-[#1979ca] text-white">File</span>
        <span className="w-[58px] border border-b-0 border-[#dadbdc] bg-[#f5f6f7] leading-[22px]">Home</span>
        <span className="w-[58px] pl-px">Share</span>
        <span className="w-[54px] pl-px">View</span>
        <span className="ml-auto flex items-center gap-[11px] pr-[4px]">
          <svg width="10" height="6" viewBox="0 0 10 6"><path d="M1 5l4-4 4 4" fill="none" stroke="#8a8a8a" strokeWidth="1.300" /></svg>
          <span className="flex h-[14px] w-[14px] items-center justify-center rounded-full bg-[#0f74cc] text-[11px] leading-none font-bold text-white">?</span>
        </span>
      </nav>
      <Ribbon />
      <div className="flex h-[34px] shrink-0 items-center pl-[12px]">
        <svg width="86" height="14" viewBox="0 0 86 14" fill="none">
          <path d="M13 7H2M6.500 2L1.500 7l5 5" stroke="#6f6f6f" strokeWidth="1.900" />
          <path d="M31 7h11M37.500 2l5 5-5 5" stroke="#d2d2d2" strokeWidth="1.900" />
          <path d="M57.500 5l2.800 3 2.800-3" stroke="#777" strokeWidth="1.500" />
          <path d="M81 13V2.500M76 7l5-5 5 5" stroke="#6f6f6f" strokeWidth="1.900" />
        </svg>
        <div className="ml-[8px] flex h-[22px] w-[570px] shrink-0 items-center border border-[#d9d9d9] pl-[4px]">
          <Folder />
          <svg width="9" height="8" viewBox="0 0 9 8" className="ml-[5px]"><path d="M4 1L1 4l3 3M8 1L5 4l3 3" fill="none" stroke="#666" strokeWidth="1.100" /></svg>
          <div className="ml-[7px] flex items-center gap-[11px]">
            <Crumb w="w-[36px]" label="GLU" />
            <Crumb w="w-[64px]" label="2017-2018" />
            <Crumb w="w-[41px]" label="Jaar 1" />
            <Crumb w="w-[65px]" label="Gameplay" />
            <Crumb w="w-[72px]" label="Engine Test" />
            <Crumb w="w-[80px]" label="Goede naam" />
          </div>
          <svg width="10" height="7" viewBox="0 0 10 7" className="mr-[4px] ml-auto"><path d="M1 1l4 4 4-4" fill="none" stroke="#777" strokeWidth="1.800" /></svg>
        </div>
        <div className="-ml-px flex h-[22px] w-[21px] items-center justify-center border border-[#d9d9d9]">
          <svg width="11" height="12" viewBox="0 0 11 12">
            <path d="M3.200 2.800A4.300 4.300 0 1 0 8 3" fill="none" stroke="#777" strokeWidth="1.700" /><path d="M6.500 0v4.500H11" fill="none" stroke="#777" strokeWidth="1.600" />
          </svg>
        </div>
        <div className="ml-[12px] flex h-[22px] w-[238px] items-center justify-between border border-[#d9d9d9] pr-[7px] pl-[8px] text-[#6d6d6d]">
          <span className="tracking-[-0.33px]">Search Goede naam</span>
          <svg width="13" height="13" viewBox="0 0 13 13"><circle cx="8" cy="4.500" r="3.500" fill="none" stroke="#6d6d6d" strokeWidth="1.600" /><path d="M5.500 7L1 12" stroke="#6d6d6d" strokeWidth="2" /></svg>
        </div>
      </div>
      <div className="mt-px flex min-h-0 flex-1">
        <NavPane />
        <FileList />
      </div>
      <footer className="flex h-[23px] shrink-0 items-center pl-[14px] text-[#26375a]">
        <span className="pb-[2px]">11 items</span>
        <div className="ml-[10px] h-[14px] w-px bg-[#f0f0f0]" />
        <span className="ml-[9px] pb-[2px] tracking-[-0.4px]">4 items selected</span>
        <div className="ml-[10px] h-[14px] w-px bg-[#f0f0f0]" />
        <div className="ml-auto flex h-[23px] w-[22px] items-center justify-center border border-[#2a9fd8] bg-[#cbe8f6]">
          <svg width="16" height="13" viewBox="0 0 16 13">
            <path d="M.5.500h4v12h-4zM.5 4.500h4M.5 8.500h4" fill="#fff" stroke="#8c8c8c" />
            <path d="M6 2.500h4M11.500 2.500H16M6 6.500h4M11.500 6.500H16M6 10.500h4M11.500 10.500H16" stroke="#777" />
          </svg>
        </div>
        <svg width="14" height="11" viewBox="0 0 14 11" className="mr-[7px] mb-[2px] ml-[4px]">
          <rect x=".5" y=".5" width="13" height="10" fill="#fff" stroke="#8c8c8c" /><rect x="2" y="2" width="10" height="7" fill="#8fc0f0" /><path d="M2 5q4-1 6 1.500l4 .5v2H2z" fill="#2f5c68" />
        </svg>
      </footer>
    </section>
  );
}

/* ---------- annotations drawn over the two windows ---------- */

function Annotations() {
  return (
    <>
      <div className="absolute top-[177px] left-[4px] z-20 h-[102px] w-[852px] border-[10px] border-[#00a78e]" />
      <div className="absolute top-[142px] left-[1414px] z-20 h-[42px] w-[129px] border-[10px] border-[#00a78e]" />
      <svg className="absolute top-[180px] left-[900px]" width="240" height="166" viewBox="900 180 240 166">
        <path d="M917 203.300L1034.500 223.500 1041.500 182 1133.500 280.500 1014.500 342.500 1020 300.500 904 281z" fill="#00a78e" />
      </svg>
      <div className="absolute top-[210px] left-[985px] w-[40px] text-center text-[65px] leading-[90px] tracking-normal text-white">9</div>
      <p className="absolute top-[333px] left-[82px] font-['DejaVu_Sans_Mono',monospace] text-[43.8px] leading-[57px] tracking-normal whitespace-pre text-[#00a78e]">
        {"Sleep deze 4 folders naar\nde project folder. (kopieer)"}
      </p>
    </>
  );
}

export default function App() {
  return (
    <div className="relative flex h-[1040px] w-[1920px] overflow-hidden bg-white font-['Open_Sans','Noto_Sans',sans-serif] text-[12px] leading-[16px] tracking-[-0.36px] whitespace-nowrap text-black">
      <ArchiveWindow />
      <ExplorerWindow />
      <Annotations />
    </div>
  );
}
